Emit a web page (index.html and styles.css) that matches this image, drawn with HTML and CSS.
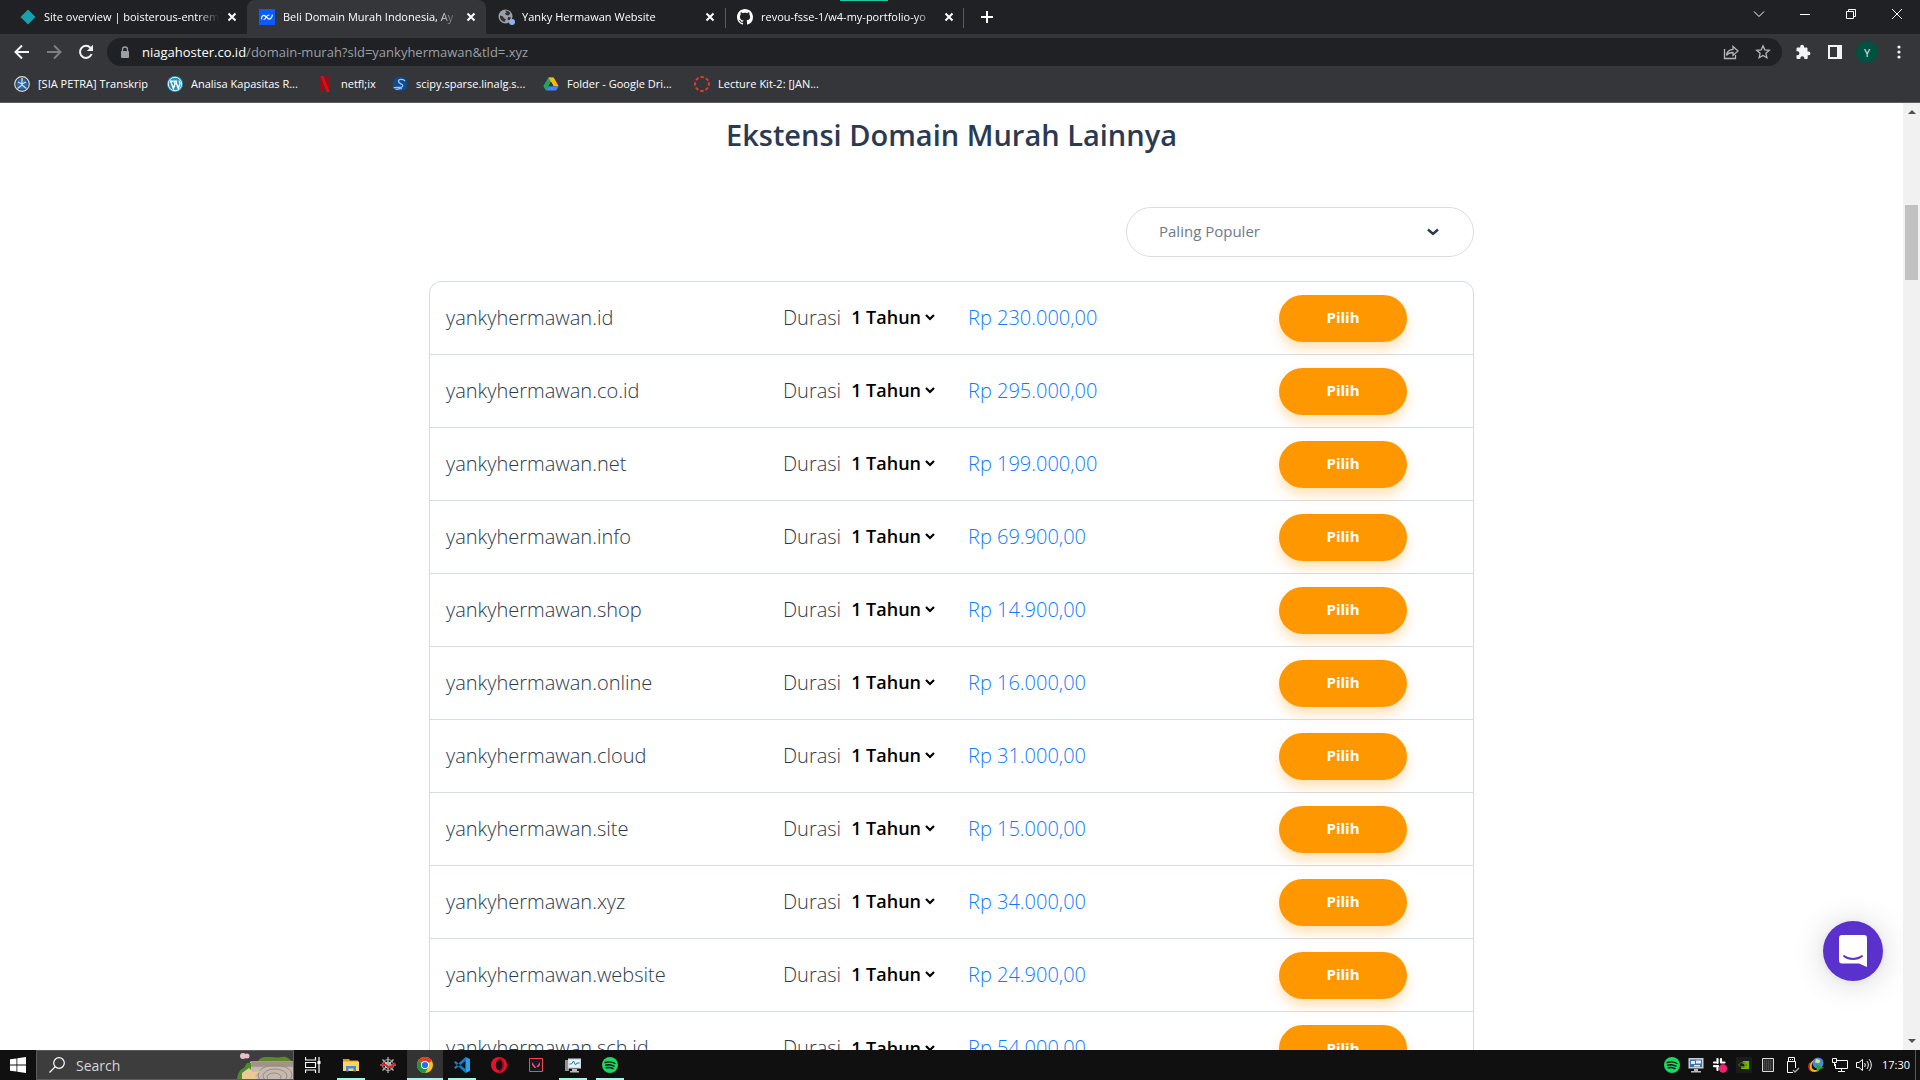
FILE: index.html
```html
<!DOCTYPE html>
<html lang="id">
<head>
<meta charset="utf-8">
<title>Beli Domain Murah Indonesia</title>
<link rel="stylesheet" href="styles.css">
</head>
<body>
<div class="screen">
<header class="browser">
  <div class="tabstrip">
    <div class="tab">
      <svg class="fav" viewBox="0 0 16 16"><path d="M8 .5 15.500 8 8 15.500.5 8z" fill="#18a0ae"/></svg>
      <span class="tab-title">Site overview | boisterous-entrem</span>
      <button class="tab-close" aria-label="Close tab"><svg viewBox="0 0 10 10"><path d="M1.500 1.500l7 7m0-7l-7 7"/></svg></button>
    </div>
    <div class="tab tab-active">
      <svg class="fav" viewBox="0 0 16 16"><path fill="#0a5cff" d="M0 0h16v16H0z"/><path d="M2.500 9.800C2.500 7 4.500 5.500 6.200 7L9 9.500c1.800 1.500 4-.3 4.300-3.500M5 10.500c1.700 0 2-4.500 5-4.500" fill="none" stroke="#fff" stroke-width="1.200" stroke-linecap="round"/></svg>
      <span class="tab-title">Beli Domain Murah Indonesia, Ay</span>
      <button class="tab-close" aria-label="Close tab"><svg viewBox="0 0 10 10"><path d="M1.500 1.500l7 7m0-7l-7 7"/></svg></button>
    </div>
    <div class="tab">
      <svg class="fav" viewBox="0 0 16 16"><circle cx="7.500" cy="7.500" r="7" fill="#9aa0a6"/><path d="M2 6.500l3 1 1 2 2 .5-1.500 3L4 12 2 9zM7 1.500l3 .5 2.500 2-2 2.500-2.500-.5-1-1.500 1.500-1zM10 8l3 .5-1.500 3-2-1z" fill="#303236"/><circle cx="14" cy="13" r="3" fill="#8ab4f8"/></svg>
      <span class="tab-title">Yanky Hermawan Website</span>
      <button class="tab-close" aria-label="Close tab"><svg viewBox="0 0 10 10"><path d="M1.500 1.500l7 7m0-7l-7 7"/></svg></button>
    </div>
    <div class="tab tab-ruled">
      <svg class="fav" viewBox="0 0 16 16"><path fill="#fff" d="M8 0C3.580 0 0 3.580 0 8c0 3.540 2.290 6.530 5.470 7.590.4.070.55-.17.55-.38 0-.19-.01-.82-.01-1.490-2.010.37-2.530-.49-2.690-.94-.09-.23-.48-.94-.82-1.130-.28-.15-.68-.52-.01-.53.63-.01 1.080.58 1.230.82.72 1.210 1.870.87 2.330.66.070-.52.28-.87.51-1.070-1.780-.2-3.640-.89-3.640-3.950 0-.87.31-1.590.82-2.150-.08-.2-.36-1.020.08-2.120 0 0 .67-.21 2.200.82.640-.18 1.320-.27 2-.27s1.360.09 2 .27c1.530-1.040 2.200-.82 2.200-.82.44 1.100.16 1.920.08 2.120.51.56.82 1.270.82 2.150 0 3.070-1.870 3.750-3.650 3.950.29.25.54.73.54 1.480 0 1.070-.01 1.930-.01 2.200 0 .21.15.46.55.38A8.010 8.010 0 0 0 16 8c0-4.420-3.580-8-8-8z"/></svg>
      <span class="tab-title">revou-fsse-1/w4-my-portfolio-yo</span>
      <button class="tab-close" aria-label="Close tab"><svg viewBox="0 0 10 10"><path d="M1.500 1.500l7 7m0-7l-7 7"/></svg></button>
    </div>
    <button class="new-tab" aria-label="New tab"><svg viewBox="0 0 12 12"><path d="M6 0v12M0 6h12"/></svg></button>
    <div class="window-controls">
      <button aria-label="Search tabs"><svg viewBox="0 0 12 12"><path d="M1 3.500l5 5 5-5"/></svg></button>
      <button aria-label="Minimize"><svg viewBox="0 0 12 12"><path d="M1 6.500h10"/></svg></button>
      <button aria-label="Restore"><svg viewBox="0 0 12 12"><path d="M1.500 3.500h7v7h-7zM3.500 3.500v-2h7v7h-2"/></svg></button>
      <button aria-label="Close"><svg viewBox="0 0 12 12"><path d="M1 1l10 10M11 1L1 11"/></svg></button>
    </div>
    <span class="load-mark"></span>
  </div>
  <div class="toolbar">
    <button aria-label="Back"><svg viewBox="0 0 16 16"><path d="M15 8H2M8 1.500L1.500 8 8 14.500"/></svg></button>
    <button class="dim" aria-label="Forward"><svg viewBox="0 0 16 16"><path d="M1 8h13M8 1.500L14.500 8 8 14.500"/></svg></button>
    <button aria-label="Reload"><svg viewBox="0 0 16 16"><path d="M13.600 10A6 6 0 1 1 12.500 3.900"/><path d="M15 .8V7H8.800z" class="solid"/></svg></button>
    <div class="address">
      <svg class="lock" viewBox="0 0 10 13"><path d="M2.500 6V3.500a2.500 2.500 0 0 1 5 0V6" fill="none" stroke="#9aa0a6" stroke-width="1.300"/><rect x="1" y="5" width="8" height="7" rx="1" fill="#9aa0a6"/></svg>
      <a class="url" href="#"><span class="host">niagahoster.co.id</span>/domain-murah?sld=yankyhermawan&amp;tld=.xyz</a>
      <button class="grey" aria-label="Share"><svg viewBox="0 0 16 16"><path d="M1.500 5v9.500h11V11M3.500 11.500C4 7.500 6.500 5.500 10 5.400V2.500l5 4.500-5 4.400V8.500c-3 0-5 .8-6.500 3z" class="thin"/></svg></button>
      <button class="grey" aria-label="Bookmark"><svg viewBox="0 0 16 16"><path d="M8 1.800l1.800 4.100 4.500.4-3.400 3 1 4.400L8 11.400l-3.900 2.300 1-4.400-3.400-3 4.500-.4z" class="thin"/></svg></button>
    </div>
    <button aria-label="Extensions"><svg viewBox="0 0 16 16"><path class="solid" d="M13.500 7.500h-1V4.500c0-.6-.5-1.100-1.100-1.100H9V2.600a1.900 1.900 0 0 0-3.800 0v.8H2.600c-.6 0-1.100.5-1.100 1.100v2.700h.9a2 2 0 0 1 0 4h-.9V14c0 .6.500 1 1.100 1h2.700v-.8a2 2 0 0 1 4 0v.8h2.300c.6 0 1.100-.4 1.100-1v-2.700h.8a1.900 1.900 0 0 0 0-3.800z"/></svg></button>
    <button aria-label="Side panel"><svg viewBox="0 0 16 16"><path d="M2 2h12v12H2z"/><path class="solid" d="M10 2h4v12h-4z"/></svg></button>
    <button class="avatar" aria-label="Profile">Y</button>
    <button aria-label="Menu"><svg viewBox="0 0 16 16"><g class="solid"><circle cx="8" cy="3" r="1.600"/><circle cx="8" cy="8" r="1.600"/><circle cx="8" cy="13" r="1.600"/></g></svg></button>
  </div>
  <nav class="bookmarks">
    <a href="#"><svg viewBox="0 0 16 16"><circle cx="8" cy="8" r="7.300" fill="#3c4650" stroke="#d8d8d8" stroke-width="1.200"/><circle cx="8" cy="8" r="5.500" fill="#2469b0"/><path d="M8 2v8M4 6l4 2 4-2M3.500 12.500L8 9l4.500 3.500" fill="none" stroke="#d5dade" stroke-width="1.300"/></svg>[SIA PETRA] Transkrip</a>
    <a href="#"><svg viewBox="0 0 16 16"><circle cx="8" cy="8" r="8" fill="#2196c0"/><circle cx="8" cy="8" r="6.700" fill="none" stroke="#fff" stroke-width=".9"/><path d="M3 5.200h3M3.800 5.500L6.400 12.500 8 8 7 5.200h3.200M8.900 5.500l2.300 7 1.700-4.800c.3-1.200-.8-1.800-.6-3" fill="none" stroke="#fff" stroke-width="1.400"/></svg>Analisa Kapasitas R...</a>
    <a href="#"><svg viewBox="0 0 16 16"><path d="M3.500 0h3v16h-3zM9.500 0h3v16h-3z" fill="#a80710"/><path d="M3.500 0h3l6 16h-3z" fill="#e50914"/></svg>netfl;ix</a>
    <a href="#"><svg viewBox="0 0 16 16"><circle cx="8" cy="8" r="7.300" fill="#0f4b93"/><path d="M13 5C11 2.500 6 3 6.500 5.500S12 8 10.500 10.500 4 10 1.500 12M10 12.500c-2 .8-4 0-6.500.8" fill="none" stroke="#9cc7ef" stroke-width="1.300"/></svg>scipy.sparse.linalg.s...</a>
    <a href="#"><svg viewBox="0 0 16 16"><path d="M5.400 1.500h5.200L5.500 10.300 2.900 14.500.3 10z" fill="#1fa463"/><path d="M5.400 1.500h5.200l5.100 8.800h-5.200z" fill="#ffba00"/><path d="M5.400 10.300h10.300l-2.600 4.300H2.900z" fill="#4285f4"/><path d="M8 5.800l2.600 4.500H5.400z" fill="#35363a"/></svg>Folder - Google Dri...</a>
    <a href="#"><svg viewBox="0 0 16 16"><circle cx="8" cy="8" r="6.900" fill="none" stroke="#e53a2d" stroke-width="2" stroke-dasharray="3.400 2.020" transform="rotate(-14 8 8)"/></svg>Lecture Kit-2: [JAN...</a>
  </nav>
</header>

<div class="viewport">
<main class="page">
  <div class="container">
    <h1>Ekstensi Domain Murah Lainnya</h1>
    <div class="filter">
      <select class="sort" aria-label="Urutkan"><option>Paling Populer</option></select>
    </div>
    <table class="domains">
      <tbody>
      <tr><td class="name">yankyhermawan.id</td><td class="term"><label>Durasi <select><option>1 Tahun</option></select></label></td><td class="price">Rp 230.000,00</td><td class="action"><button>Pilih</button></td></tr>
      <tr><td class="name">yankyhermawan.co.id</td><td class="term"><label>Durasi <select><option>1 Tahun</option></select></label></td><td class="price">Rp 295.000,00</td><td class="action"><button>Pilih</button></td></tr>
      <tr><td class="name">yankyhermawan.net</td><td class="term"><label>Durasi <select><option>1 Tahun</option></select></label></td><td class="price">Rp 199.000,00</td><td class="action"><button>Pilih</button></td></tr>
      <tr><td class="name">yankyhermawan.info</td><td class="term"><label>Durasi <select><option>1 Tahun</option></select></label></td><td class="price">Rp 69.900,00</td><td class="action"><button>Pilih</button></td></tr>
      <tr><td class="name">yankyhermawan.shop</td><td class="term"><label>Durasi <select><option>1 Tahun</option></select></label></td><td class="price">Rp 14.900,00</td><td class="action"><button>Pilih</button></td></tr>
      <tr><td class="name">yankyhermawan.online</td><td class="term"><label>Durasi <select><option>1 Tahun</option></select></label></td><td class="price">Rp 16.000,00</td><td class="action"><button>Pilih</button></td></tr>
      <tr><td class="name">yankyhermawan.cloud</td><td class="term"><label>Durasi <select><option>1 Tahun</option></select></label></td><td class="price">Rp 31.000,00</td><td class="action"><button>Pilih</button></td></tr>
      <tr><td class="name">yankyhermawan.site</td><td class="term"><label>Durasi <select><option>1 Tahun</option></select></label></td><td class="price">Rp 15.000,00</td><td class="action"><button>Pilih</button></td></tr>
      <tr><td class="name">yankyhermawan.xyz</td><td class="term"><label>Durasi <select><option>1 Tahun</option></select></label></td><td class="price">Rp 34.000,00</td><td class="action"><button>Pilih</button></td></tr>
      <tr><td class="name">yankyhermawan.website</td><td class="term"><label>Durasi <select><option>1 Tahun</option></select></label></td><td class="price">Rp 24.900,00</td><td class="action"><button>Pilih</button></td></tr>
      <tr><td class="name">yankyhermawan.sch.id</td><td class="term"><label>Durasi <select><option>1 Tahun</option></select></label></td><td class="price">Rp 54.000,00</td><td class="action"><button>Pilih</button></td></tr>
      </tbody>
    </table>
  </div>
  <button class="chat" aria-label="Chat"><svg viewBox="0 0 28 32"><path d="M3 0h22a3 3 0 0 1 3 3v29l-8-3.500H3a3 3 0 0 1-3-3V3a3 3 0 0 1 3-3z" fill="#fff"/><path d="M5 21c5 4 13 4 18 0" fill="none" stroke="#5a31cc" stroke-width="1.800" stroke-linecap="round"/></svg></button>
</main>
<div class="scrollbar">
  <svg viewBox="0 0 8 4"><path d="M0 4l4-4 4 4z"/></svg>
  <span class="thumb"></span>
  <svg viewBox="0 0 8 4"><path d="M0 0l4 4 4-4z"/></svg>
</div>
</div>

<footer class="taskbar">
  <button class="start" aria-label="Start"><svg viewBox="0 0 16 16"><path fill="#fff" d="M0 2.300l6.500-.9v6.100H0zM7.300 1.300L16 0v7.500H7.300zM0 8.400h6.500v6.200L0 13.700zM7.300 8.400H16V16l-8.700-1.200z"/></svg></button>
  <div class="search">
    <svg class="glass" viewBox="0 0 16 16"><circle cx="10" cy="6" r="5.300"/><path d="M6.300 9.700L.5 15.500"/></svg>
    <input type="text" placeholder="Search" aria-label="Search">
    <svg class="scene" viewBox="0 0 56 28"><path d="M21 10c3-5 8-4 12-4s8 1 12 0 8 2 11 6v4H20z" fill="#5f8a2c"/><path d="M14 10h42v18H6c1-8 4-13 8-18z" fill="#c6bab0"/><path d="M14 10h42v6H14z" fill="#a89a90"/><g fill="none" stroke="#9a8b80" stroke-width="1"><ellipse cx="37" cy="26" rx="7" ry="4"/><ellipse cx="38" cy="25" rx="12" ry="7"/><ellipse cx="38" cy="24" rx="17" ry="10"/><path d="M15 12h41M15 14h41"/></g><path d="M0 28c1-6 3-10 7-11l3-5h4v8l-3 8z" fill="#4e8b2c"/><path d="M5 22l7-5 4 4 8-1-6 4 2 4H5z" fill="#ecca94"/><circle cx="6" cy="5" r="3" fill="#e9c3c8"/><circle cx="10" cy="5" r="2.500" fill="#e9c3c8"/></svg>
  </div>
  <div class="apps">
    <button aria-label="Task view"><svg viewBox="0 0 16 16"><path d="M.5 0v3h10V0M.5 16v-3h10v3M.5 5.500h10v5H.5zM14 0v16" fill="none" stroke="#fff" stroke-width="1.200"/><path d="M12.500 4h3v3h-3z" fill="#fff"/></svg></button>
    <button class="open" aria-label="Explorer"><svg viewBox="0 0 16 16"><path d="M0 2h6l1 1.500h8V6H0z" fill="#d99e18"/><path d="M0 4.500h16V14H0z" fill="#ffd461"/><path d="M3 14.500V9h10v5.500h-2.500v-3h-5v3z" fill="#3a8fd8"/></svg></button>
    <button aria-label="Network viewer"><svg viewBox="0 0 16 16"><path d="M8 0v16M0 8h16M2.500 2.500l11 11M13.500 2.500l-11 11" stroke="#bbb" stroke-width="1.200"/><circle cx="8" cy="8" r="5.500" fill="none" stroke="#aaa"/><circle cx="8" cy="8" r="3" fill="none" stroke="#ccc"/><path d="M1 9c2-3 4-2 6 0s5 1 8-3" fill="none" stroke="#e02222" stroke-width="2"/></svg></button>
    <button class="open current" aria-label="Chrome"><svg viewBox="0 0 16 16"><circle cx="8" cy="8" r="8" fill="#fbc116"/><path d="M8 8L1.100 4A8 8 0 0 1 14.900 4z" fill="#e33b2e"/><path d="M1.100 4A8 8 0 0 0 8 16l3.500-6L8 8z" fill="#229342"/><circle cx="8" cy="8" r="4" fill="#fff"/><circle cx="8" cy="8" r="3.100" fill="#1a73e8"/></svg></button>
    <button class="open" aria-label="VS Code"><svg viewBox="0 0 16 16"><path d="M11.500 0L16 2v12l-4.500 2z" fill="#2ba0ee"/><path d="M12 3.500L1.500 12 0 10.600 11.500 0zM12 12.500L1.500 4 0 5.400 11.500 16z" fill="#0d7fcb"/></svg></button>
    <button aria-label="Opera"><svg viewBox="0 0 16 16"><circle cx="8" cy="8" r="8" fill="#e8112d"/><path d="M8 .5A8 8 0 0 1 8 15.500z" fill="#a50a1c"/><ellipse cx="8" cy="8" rx="3.200" ry="5.300" fill="#101010"/></svg></button>
    <button aria-label="Valorant"><svg viewBox="0 0 16 16"><path d="M1.500 1.500h13v13h-13z" fill="#111b26" stroke="#ff4655"/><path d="M4 5l4.500 6H6.500L4 8zM12 5v3l-1.500 2H8.300z" fill="#ff4655"/></svg></button>
    <button class="open" aria-label="Monitor"><svg viewBox="0 0 16 16"><path d="M0 3h4v11H0z" fill="#8c9296"/><path d="M3 1.500h13v10H3z" fill="#d7dde0"/><path d="M4.500 3h10v7h-10z" fill="#e8f4fb"/><path d="M4.500 7h2l2-3 2 4 1.500-2h2.500" fill="none" stroke="#2277bb"/><path d="M7 12h5v2H7zM5 14h9v1.500H5z" fill="#bbb"/></svg></button>
    <button class="open" aria-label="Spotify"><svg viewBox="0 0 16 16"><circle cx="8" cy="8" r="8" fill="#1ed760"/><path d="M3.200 5.500c3.500-1 7-.6 9.700 1M3.700 8.200c3-.8 5.800-.4 8.200 1M4.200 10.800c2.500-.6 4.800-.3 6.800.8" fill="none" stroke="#101010" stroke-width="1.400" stroke-linecap="round"/></svg></button>
  </div>
  <div class="tray">
    <svg viewBox="0 0 16 16"><circle cx="8" cy="8" r="8" fill="#1ed760"/><path d="M3.200 5.500c3.500-1 7-.6 9.700 1M3.700 8.200c3-.8 5.800-.4 8.200 1M4.200 10.800c2.500-.6 4.800-.3 6.800.8" fill="none" stroke="#101010" stroke-width="1.400" stroke-linecap="round"/></svg>
    <svg viewBox="0 0 16 16"><path d="M.5 1h15v10.500H.5z" fill="#c9ced3"/><path d="M2 2.500h12V10H2z" fill="#3b72b0"/><path d="M3 4h4v3H3zM8 3.500h5v3H8zM6 8h6v1.500H6z" fill="#e6edf4"/><path d="M6 12h4v2H6zM3 14h10v1.500H3z" fill="#b5babf"/></svg>
    <svg viewBox="0 0 16 16"><path d="M5.500 2v4M2 5.500h1.500M9 2v3.500M9 5.500h3.500M2 9.200h4M5.500 9.200V13" stroke="#fff" stroke-width="2.200" stroke-linecap="round"/><circle cx="11" cy="11.500" r="4.200" fill="#f0206e"/></svg>
    <svg viewBox="0 0 16 16"><path d="M0 0h16v16H0z" fill="#1c1c1c"/><path d="M7 4h6v8H5z" fill="#76b900"/><path d="M2.500 8c2.500-3.500 6-3.500 8 0-2 3-5.500 3-8 0z" fill="none" stroke="#4c7a00"/><circle cx="7" cy="8" r="1.500" fill="#1c1c1c"/></svg>
    <svg viewBox="0 0 16 16"><path d="M2.500 1.500h11v13h-11z" fill="#2c2c2c" stroke="#ddd"/><path d="M4 4h8M4 6h8M4 8h8M4 10h8M4 12h8" stroke="#666" stroke-dasharray="1 1"/></svg>
    <svg viewBox="0 0 16 16"><path d="M4.500 4.500v-4h6v4M9 15.500H3.500v-11h8V11M6 2.500h1M8 2.500h1" fill="none" stroke="#fff"/><path d="M9 13l2 2 4-4" fill="none" stroke="#aaa" stroke-width="1.300"/></svg>
    <svg viewBox="0 0 16 16"><circle cx="10" cy="6" r="5.500" fill="#4a8bd0"/><path d="M8 2c2 0 5 1 4 3s-4 1-5 0z" fill="#c9e2a0"/><path d="M6 3C1 5 0 11 3 14c3 2 7 1 9-2-4 2-7 1-8-1s0-5 2-8z" fill="#f0b51d"/><path d="M2 6c-2 3-1 7 1 8" fill="none" stroke="#d42a1d" stroke-width="1.500"/><path d="M8 7l8 4-4 1-3 3z" fill="#28a62d"/></svg>
    <svg viewBox="0 0 16 16"><path d="M5 3.500h10.500v8H3.500V7M9.500 11.500v3M6 14.500h7M.5 1.500h4v4h-4zM2.500 5.500V9" fill="none" stroke="#fff"/></svg>
    <svg viewBox="0 0 16 16"><path d="M.5 5.500H3l3.500-3v11l-3.500-3H.5zM8.500 6c1 1.200 1 2.800 0 4M10.800 4c2 2.300 2 5.700 0 8M13 2.200c3 3.400 3 8.200 0 11.600" fill="none" stroke="#fff"/></svg>
    <time class="clock">17:30</time>
  </div>
</footer>
</div>
</body>
</html>
```
FILE: styles.css
```css
* { box-sizing: border-box; }
body {
  margin: 0;
  font-family: "Open Sans", "Noto Sans", sans-serif;
  background: #fff;
}
button {
  margin: 0;
  padding: 0;
  border: 0;
  background: none;
  color: inherit;
  font: inherit;
}
button, svg, .tab { flex: none; }
svg { display: block; }
.screen { display: flex; flex-direction: column; height: 100vh; overflow: hidden; }

/* Browser window */
.browser {
  flex: none;
  background: #35363a;
  border-bottom: 1px solid #5c5d60;
  color: #fff;
  font-size: 11px;
}
.tabstrip {
  position: relative;
  display: flex;
  height: 34px;
  padding-left: 8px;
  background: #202124;
}
.tab {
  display: flex;
  align-items: center;
  gap: 8px;
  width: 239px;
  height: 34px;
  padding: 0 10px 0 12px;
}
.tab-active { background: #35363a; border-radius: 8px 8px 0 0; }
.tab-ruled {
  background: linear-gradient(#5a5c60, #5a5c60) 0 8px / 1px 20px no-repeat,
              linear-gradient(#5a5c60, #5a5c60) 100% 8px / 1px 20px no-repeat;
}
.fav { width: 16px; height: 16px; overflow: visible; }
.tab-title {
  flex: 1;
  overflow: hidden;
  white-space: nowrap;
  line-height: 20px;
  mask-image: linear-gradient(90deg, #000 88%, transparent);
}
.tab-close svg { width: 10px; height: 10px; stroke: #fff; stroke-width: 2; }
.new-tab { width: 46px; display: grid; place-items: center; }
.new-tab svg { width: 12px; height: 12px; stroke: #fff; stroke-width: 2; }
.window-controls { display: flex; margin-left: auto; height: 28px; }
.window-controls button { width: 46px; display: grid; place-items: center; }
.window-controls svg { width: 12px; height: 12px; fill: none; stroke: #fff; }
.load-mark {
  position: absolute;
  top: 0;
  left: 840px;
  width: 48px;
  height: 1px;
  background: #1fc8a4;
}
.toolbar {
  display: flex;
  align-items: center;
  gap: 10px;
  height: 36px;
  padding: 0 10px 0 11px;
}
.toolbar button { width: 22px; height: 22px; display: grid; place-items: center; color: #f1f3f4; }
.toolbar button svg { width: 16px; height: 16px; fill: none; stroke: currentColor; stroke-width: 2; }
.toolbar .solid { fill: currentColor; stroke: none; }
.toolbar .thin { stroke-width: 1.3; }
.toolbar .dim { color: #7d7e81; }
.toolbar .grey { color: #b4b6b9; }
.address {
  flex: 1;
  display: flex;
  align-items: center;
  gap: 10px;
  height: 28px;
  padding: 0 8px 0 13px;
  border-radius: 14px;
  background: #202124;
}
.lock { width: 10px; height: 13px; }
.url { flex: 1; padding-left: 2px; color: #9aa0a6; font-size: 13px; text-decoration: none; }
.host { color: #fff; }
.toolbar .avatar { border-radius: 50%; background: #00513f; font-size: 11px; }
.bookmarks {
  display: grid;
  grid-template-columns: 153px 150px 75px 151px 151px auto;
  align-items: center;
  height: 32px;
  padding: 0 14px 5px;
}
.bookmarks a {
  display: flex;
  align-items: center;
  gap: 8px;
  color: #fff;
  text-decoration: none;
  white-space: nowrap;
}
.bookmarks svg { width: 16px; height: 16px; }

/* Web page */
.viewport { flex: 1; display: flex; min-height: 0; }
.page { position: relative; flex: 1; overflow: hidden; color: #2b3a4e; }
.container { max-width: 1045px; margin: 0 auto; }
h1 {
  margin: 0;
  padding-top: 12px;
  text-align: center;
  font-size: 29px;
  font-weight: 600;
  line-height: 40px;
  color: #2b3a52;
}
.filter { display: flex; justify-content: flex-end; padding: 52px 0 24px; }
select {
  appearance: none;
  border: 0;
  margin: 0;
  padding: 0;
  background: none;
  font: inherit;
}
.sort {
  width: 348px;
  height: 50px;
  padding: 0 32px 2px;
  border: 1px solid #d9dde2;
  border-radius: 25px;
  color: #6f7a87;
  font-size: 15px;
  background: url("data:image/svg+xml,%3Csvg xmlns='http://www.w3.org/2000/svg' viewBox='0 0 12 8'%3E%3Cpath d='M1 1.500l5 4.500 5-4.500' fill='none' stroke='%232b3a52' stroke-width='2.400'/%3E%3C/svg%3E") right 34px center / 12px 8px no-repeat;
}
.domains {
  width: 100%;
  table-layout: fixed;
  border: 1px solid #d7dce1;
  border-radius: 12px;
  border-spacing: 0;
  font-size: 20px;
  font-weight: 350;
}
.domains td { height: 73px; padding: 0 0 2px 16px; border-bottom: 1px solid #d7dce1; white-space: nowrap; }
.domains tr:last-child td { border-bottom: 0; }
.domains .name { width: 337px; }
.domains .term { width: 185px; }
.domains .price { width: 311px; color: #0f7bff; }
.domains .action { padding-bottom: 0; }
.term label { display: flex; gap: 10px; }
.term select {
  width: 84px;
  color: #000;
  font-size: 18px;
  font-weight: 600;
  background: url("data:image/svg+xml,%3Csvg xmlns='http://www.w3.org/2000/svg' viewBox='0 0 10 8'%3E%3Cpath d='M1 2l4 4 4-4' fill='none' stroke='%23000' stroke-width='2.200'/%3E%3C/svg%3E") right center / 10px 8px no-repeat;
}
.action button {
  display: block;
  width: 128px;
  height: 47px;
  padding-bottom: 2px;
  border-radius: 24px;
  background: #ff9800;
  box-shadow: 0 7px 12px rgba(255, 152, 0, .28);
  color: #fff;
  font-size: 15px;
  font-weight: 700;
}
.chat {
  position: absolute;
  right: 20px;
  bottom: 69px;
  width: 60px;
  height: 60px;
  border-radius: 50%;
  background: #5a31cc;
  box-shadow: 0 2px 32px rgba(0, 0, 0, .16), 0 1px 6px rgba(0, 0, 0, .06);
  display: grid;
  place-items: center;
}
.chat svg { width: 28px; height: 32px; }
.scrollbar {
  flex: none;
  display: flex;
  flex-direction: column;
  align-items: center;
  width: 17px;
  padding: 7px 0;
  background: #f1f1f1;
}
.scrollbar svg { width: 8px; height: 4px; fill: #505050; }
.thumb { width: 13px; height: 75px; margin: 91px 0 auto; background: #c1c1c1; }

/* Taskbar */
.taskbar { flex: none; display: flex; height: 30px; background: #101010; color: #fff; }
.start { width: 36px; display: grid; place-items: center; }
.start svg { width: 16px; height: 16px; }
.search {
  display: flex;
  align-items: center;
  width: 258px;
  padding-left: 12px;
  border: 1px solid #5c5c5c;
  background: #3d3d3d;
}
.glass { width: 16px; height: 16px; fill: none; stroke: #fff; stroke-width: 1.2; }
.search input {
  flex: 1;
  min-width: 0;
  padding: 0 0 0 11px;
  border: 0;
  background: none;
  color: #fff;
  font: 14px "Open Sans", sans-serif;
}
.search input::placeholder { color: #d6d6d6; opacity: 1; }
.scene { width: 56px; height: 28px; }
.apps { display: flex; gap: 1px; }
.apps button { width: 36px; display: grid; place-items: center; }
.apps button:first-child { width: 38px; }
.apps svg { width: 16px; height: 16px; }
.apps .open { background: linear-gradient(#a6f4ea, #a6f4ea) 50% 100% / 28px 2px no-repeat; }
.apps .current { background: linear-gradient(#a6f4ea, #a6f4ea) 50% 100% / 36px 2px no-repeat #333; }
.tray { display: flex; align-items: center; gap: 8px; margin-left: auto; padding-right: 4px; }
.tray svg { width: 16px; height: 16px; }
.clock {
  width: 36px;
  padding-left: 2px;
  border-right: 1px solid #5a5a5a;
  font-size: 11px;
  line-height: 30px;
  white-space: nowrap;
}
```
